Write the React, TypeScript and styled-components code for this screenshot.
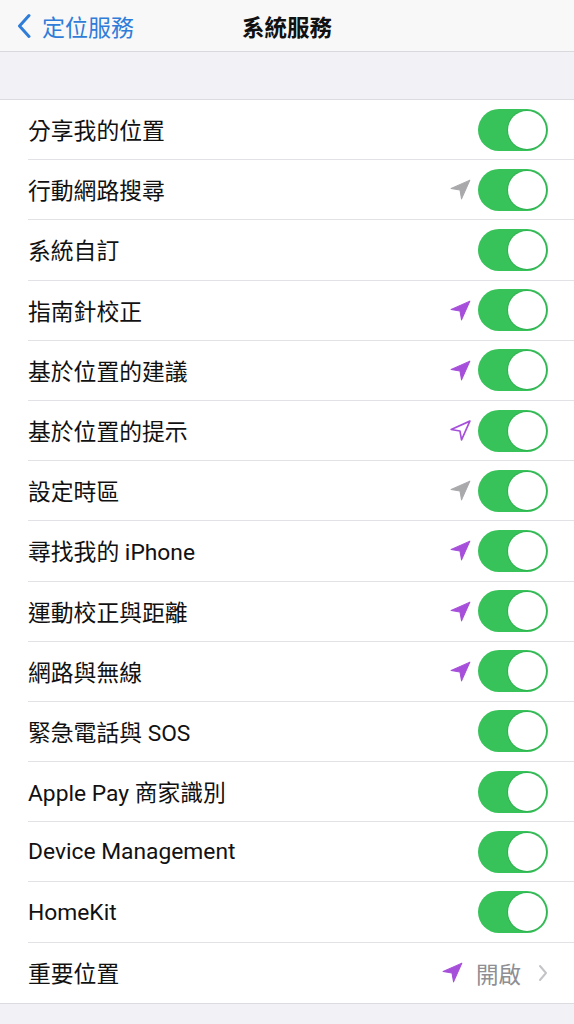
import * as React from "react";
import styled, { createGlobalStyle } from "styled-components";

const GlobalStyle = createGlobalStyle`
  html, body {
    margin: 0;
    padding: 0;
    background: #f1f1f6;
  }
  body {
    font-family: Roboto, "Noto Sans CJK TC", sans-serif;
    -webkit-font-smoothing: antialiased;
  }
`;

const Page = styled.div`
  width: 574px;
  min-height: 1024px;
  background: #f1f1f6;
  display: flex;
  flex-direction: column;
`;

const NavBar = styled.div`
  height: 52px;
  background: #f8f8f9;
  border-bottom: 1px solid #d9d9dd;
  position: relative;
  display: flex;
  align-items: center;
  box-sizing: border-box;
`;

const BackButton = styled.div`
  display: flex;
  align-items: center;
  gap: 11px;
  padding-left: 17px;
  color: #2f7dd8;
  font-size: 23px;
  font-family: "Noto Sans CJK TC", sans-serif;
`;

const NavTitle = styled.div`
  position: absolute;
  left: 0;
  right: 0;
  text-align: center;
  font-size: 22.5px;
  font-weight: 600;
  color: #111;
  font-family: "Noto Sans CJK TC", sans-serif;
  pointer-events: none;
`;

const Spacer = styled.div`
  height: 47px;
`;

const List = styled.div`
  background: #fff;
  border-top: 1px solid #dcdce0;
  border-bottom: 1px solid #dcdce0;
`;

const Row = styled.div<{ $last?: boolean }>`
  height: 60.2px;
  margin-left: 28px;
  padding-right: 26px;
  display: flex;
  align-items: center;
  border-bottom: ${(p) => (p.$last ? "none" : "1px solid #e2e2e6")};
  box-sizing: border-box;
`;

const Label = styled.div`
  flex: 1;
  font-size: 22.8px;
  color: #111;
`;

const Accessory = styled.div`
  display: flex;
  align-items: center;
  gap: 5px;
`;

const Track = styled.div`
  width: 70px;
  height: 42px;
  border-radius: 21px;
  background: #37c35a;
  position: relative;
  box-sizing: border-box;
`;

const Knob = styled.div`
  position: absolute;
  top: 2px;
  right: 2px;
  width: 38px;
  height: 38px;
  border-radius: 50%;
  background: #fff;
  box-shadow: 0 0 0 1px rgba(40, 150, 70, 0.35);
`;

const Value = styled.span`
  font-size: 22.5px;
  color: #8e8e93;
  font-family: "Noto Sans CJK TC", sans-serif;
  margin-left: 6px;
`;

const Chevron = styled.svg`
  margin-left: 12px;
`;

type ArrowKind = "none" | "gray" | "purple" | "outline";

const ArrowIcon = ({ kind }: { kind: ArrowKind }) => {
  if (kind === "none") return null;
  const color = kind === "gray" ? "#a9a9ac" : "#a64fda";
  const filled = kind !== "outline";
  return (
    <svg width="25" height="25" viewBox="0 0 24 24">
      <path
        d="M21 3 L3 11 L11.5 12.5 L13 21 Z"
        fill={filled ? color : "none"}
        stroke={color}
        strokeWidth={filled ? 1 : 1.6}
        strokeLinejoin="round"
      />
    </svg>
  );
};

const Toggle = () => (
  <Track>
    <Knob />
  </Track>
);

type Item = { label: string; arrow: ArrowKind; value?: string };

const items: Item[] = [
  { label: "分享我的位置", arrow: "none" },
  { label: "行動網路搜尋", arrow: "gray" },
  { label: "系統自訂", arrow: "none" },
  { label: "指南針校正", arrow: "purple" },
  { label: "基於位置的建議", arrow: "purple" },
  { label: "基於位置的提示", arrow: "outline" },
  { label: "設定時區", arrow: "gray" },
  { label: "尋找我的 iPhone", arrow: "purple" },
  { label: "運動校正與距離", arrow: "purple" },
  { label: "網路與無線", arrow: "purple" },
  { label: "緊急電話與 SOS", arrow: "none" },
  { label: "Apple Pay 商家識別", arrow: "none" },
  { label: "Device Management", arrow: "none" },
  { label: "HomeKit", arrow: "none" },
  { label: "重要位置", arrow: "purple", value: "開啟" },
];

export default function App() {
  return (
    <Page>
      <GlobalStyle />
      <NavBar>
        <BackButton>
          <svg width="14" height="26" viewBox="0 0 14 26">
            <path d="M12 2.5 L2.5 13 L12 23.5" fill="none" stroke="#2f7dd8" strokeWidth="3" strokeLinecap="round" strokeLinejoin="round" />
          </svg>
          定位服務
        </BackButton>
        <NavTitle>系統服務</NavTitle>
      </NavBar>
      <Spacer />
      <List>
        {items.map((it, i) => (
          <Row key={it.label} $last={i === items.length - 1}>
            <Label>{it.label}</Label>
            <Accessory>
              <ArrowIcon kind={it.arrow} />
              {it.value ? (
                <>
                  <Value>{it.value}</Value>
                  <Chevron width="10" height="18" viewBox="0 0 10 18">
                    <path d="M2 2 L8 9 L2 16" fill="none" stroke="#c4c4c8" strokeWidth="2" strokeLinecap="round" strokeLinejoin="round" />
                  </Chevron>
                </>
              ) : (
                <Toggle />
              )}
            </Accessory>
          </Row>
        ))}
      </List>
    </Page>
  );
}
